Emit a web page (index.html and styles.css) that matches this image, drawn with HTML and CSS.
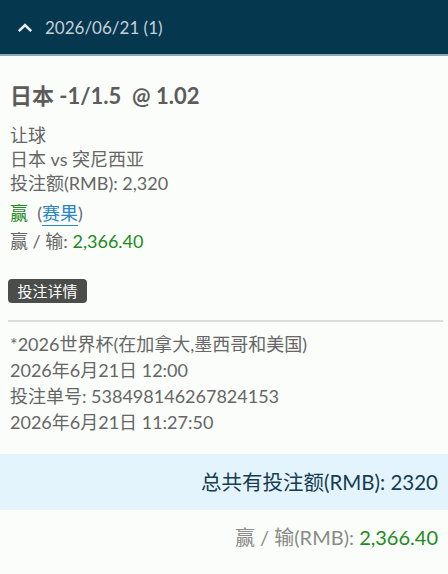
FILE: index.html
```html
<!DOCTYPE html>
<html lang="zh">
  <head>
    <meta charset="UTF-8" />
    <meta name="viewport" content="width=device-width, initial-scale=1.0" />
    <title>投注记录</title>
    <link rel="stylesheet" href="styles.css">
  </head>
  <body>
    <header class="day-bar">
      <svg class="chevron" width="16" height="11" viewBox="0 0 16 11">
        <path d="M1.8 9.2 L8 3 L14.2 9.2" fill="none" stroke="#e8eef2" stroke-width="2.6" />
      </svg>
      <span>2026/06/21 (1)</span>
    </header>

    <div class="bet">
      <h2 class="bet-title">日本 -1/1.5 &nbsp;@ 1.02</h2>
      <p>让球</p>
      <p>日本 vs 突尼西亚</p>
      <p>投注额(RMB): 2,320</p>
      <p class="result"><span class="win">赢</span>&nbsp; (<a href="#">赛果</a>)</p>
      <p>赢 / 输: <span class="win">2,366.40</span></p>
      <button class="detail-btn">投注详情</button>
      <hr />
      <div class="meta">
        <p>*2026世界杯(在加拿大,墨西哥和美国)</p>
        <p>2026年6月21日 12:00</p>
        <p>投注单号: 538498146267824153</p>
        <p>2026年6月21日 11:27:50</p>
      </div>
    </div>

    <div class="total">总共有投注额(RMB): 2320</div>
    <div class="winloss">赢 / 输(RMB): <span class="win">2,366.40</span></div>
  </body>
</html>
```

FILE: styles.css
```css
body {
  margin: 0;
  font-family: Lato, "Noto Sans CJK SC", sans-serif;
  background-color: #fafdf9;
  color: #666;
}
.day-bar {
  display: flex;
  align-items: center;
  height: 54px;
  padding-left: 17px;
  background-color: #05374f;
  border-bottom: 2px solid #8fa6b4;
  color: #c5d0d6;
  font-size: 17px;
}
.chevron {
  margin-right: 12px;
}
.bet {
  padding: 24px 5px 0 10px;
}
.bet-title {
  margin: 0 0 11px 0;
  font-size: 22px;
  font-weight: bold;
  color: #5c5c5c;
  line-height: 32px;
}
.bet p {
  margin: 0;
  font-size: 18px;
  line-height: 24px;
}
.bet .result {
  margin-top: 2px;
  line-height: 32px;
}
.result a {
  color: #2a86c4;
  text-decoration: underline;
  text-underline-offset: 5px;
}
.win {
  color: #1d8a22;
}
.detail-btn {
  display: block;
  margin: 26px 0 0 -2px;
  width: 79px;
  height: 24px;
  padding: 0;
  border: none;
  border-radius: 4px;
  background-color: #4b4d4a;
  color: #fff;
  font-family: inherit;
  font-size: 15px;
  line-height: 24px;
}
hr {
  margin: 17px 0 0 -2px;
  border: none;
  border-top: 2px solid #dcdedb;
}
.meta {
  padding: 9px 0 19px 0;
}
.meta p {
  line-height: 26px;
}
.total {
  background-color: #e4f4fd;
  padding: 0 10px;
  height: 56px;
  line-height: 56px;
  text-align: right;
  font-size: 20.5px;
  color: #163c52;
}
.winloss {
  padding: 0 10px;
  height: 54px;
  line-height: 54px;
  text-align: right;
  font-size: 20px;
  color: #8a8a8a;
}
```
